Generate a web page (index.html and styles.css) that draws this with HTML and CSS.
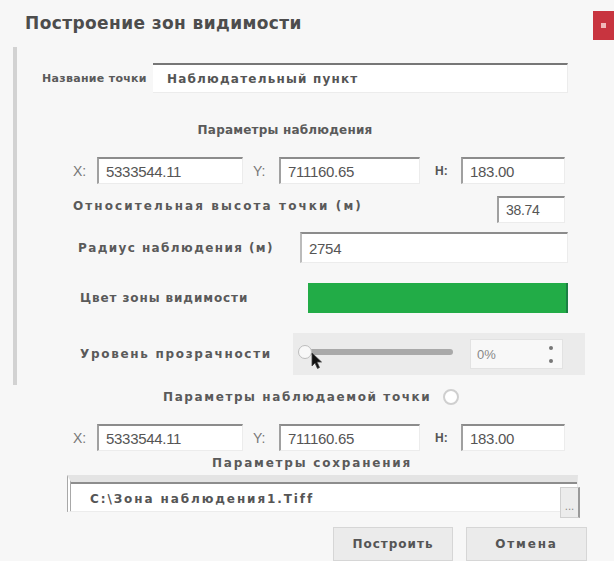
FILE: index.html
```html
<!DOCTYPE html>
<html lang="ru">
<head>
<meta charset="utf-8">
<title>Построение зон видимости</title>
<link rel="stylesheet" href="styles.css">
</head>
<body>
<div class="dialog">
  <div class="titlebar">
    <div class="title">Построение зон видимости</div>
    <div class="close"><span></span></div>
  </div>

  <div class="panel">
    <div class="row name-row">
      <span class="label">Название точки</span>
      <div class="field name-field">Наблюдательный пункт</div>
    </div>

    <div class="heading heading-obs">Параметры наблюдения</div>

    <div class="coords">
      <span class="axis ax-x">X:</span><div class="field num fx">5333544.11</div>
      <span class="axis ax-y">Y:</span><div class="field num fy">711160.65</div>
      <span class="axis ax-h">H:</span><div class="field num fh">183.00</div>
    </div>

    <div class="row rel-row">
      <span class="label">Относительная высота точки (м)</span>
      <div class="field num rel-field">38.74</div>
    </div>

    <div class="row radius-row">
      <span class="label">Радиус наблюдения (м)</span>
      <div class="field num radius-field">2754</div>
    </div>

    <div class="row color-row">
      <span class="label">Цвет зоны видимости</span>
      <div class="swatch"></div>
    </div>

    <div class="row alpha-row">
      <span class="label">Уровень прозрачности</span>
      <div class="alpha-box">
        <div class="slider">
          <div class="track"></div>
          <div class="thumb"></div>
          <svg class="cursor" width="12" height="18" viewBox="0 0 12 18"><path d="M1 1 L1 14 L4 11 L6.5 16.5 L8.5 15.5 L6 10 L10.5 10 Z" fill="#111" stroke="#444" stroke-width="0.8" stroke-linejoin="round"/></svg>
        </div>
        <div class="spin">
          <span class="spin-val">0%</span>
          <span class="spin-arrows"><i></i><i></i></span>
        </div>
      </div>
    </div>
  </div>

  <div class="heading heading-target">Параметры наблюдаемой точки <span class="radio"></span></div>

  <div class="coords coords-target">
    <span class="axis ax-x">X:</span><div class="field num fx">5333544.11</div>
    <span class="axis ax-y">Y:</span><div class="field num fy">711160.65</div>
    <span class="axis ax-h">H:</span><div class="field num fh">183.00</div>
  </div>

  <div class="heading heading-save">Параметры сохранения</div>

  <div class="file-row">
    <div class="field file-field">C:\Зона наблюдения1.Tiff</div>
    <div class="browse">...</div>
  </div>

  <div class="actions">
    <div class="btn btn-build">Построить</div>
    <div class="btn btn-cancel">Отмена</div>
  </div>
</div>
</body>
</html>
```

FILE: styles.css
```css
html, body {
  margin: 0;
  padding: 0;
  background: #f7f7f7;
  overflow: hidden;
}

.dialog {
  width: 614px;
  height: 561px;
  font-family: "DejaVu Sans", "Noto Sans", sans-serif;
  color: #555;
}

/* title bar */
.titlebar {
  height: 47px;
  display: flex;
  justify-content: space-between;
  align-items: flex-start;
}
.title {
  padding-left: 25px;
  line-height: 47px;
  font-size: 17px;
  font-weight: bold;
  letter-spacing: 0.4px;
  color: #4d4d4d;
}
.close {
  margin-top: 11px;
  width: 21px;
  height: 29px;
  background: #c8343f;
  display: flex;
  align-items: center;
  justify-content: center;
}
.close span {
  width: 5px;
  height: 5px;
  background: #f0b9b9;
}

/* bordered upper group */
.panel {
  margin-left: 13px;
  border-left: 4px solid #d2d2d2;
  padding: 16px 0 10px 0;
}

.row {
  display: flex;
  align-items: center;
}

.label {
  font-size: 12px;
  font-weight: bold;
  color: #5a5a5a;
  white-space: nowrap;
}

.field {
  box-sizing: border-box;
  background: #fff;
  border-top: 2px solid #8c8c8c;
  border-left: 2px solid #a0a0a0;
  border-right: 1px solid #ececec;
  border-bottom: 1px solid #ececec;
  display: flex;
  align-items: center;
  white-space: nowrap;
}
.num {
  font-family: "Liberation Sans", Arial, sans-serif;
  font-size: 15px;
  color: #555;
  padding-left: 7px;
  letter-spacing: -0.3px;
}

.name-row {
  height: 30px;
  padding-left: 25px;
}
.name-row .label {
  width: 111px;
  font-size: 11px;
  letter-spacing: 0.3px;
}
.name-field {
  width: 415px;
  height: 30px;
  padding-left: 14px;
  font-size: 12px;
  font-weight: bold;
  letter-spacing: 1.2px;
  color: #555;
  border-left: none;
  border-top-color: #777;
}

.heading {
  height: 20px;
  line-height: 20px;
  font-size: 12px;
  font-weight: bold;
  color: #5a5a5a;
  white-space: nowrap;
}
.heading-obs {
  margin-top: 27px;
  width: 536px;
  text-align: center;
  letter-spacing: 0.2px;
}

.coords {
  margin-top: 17px;
  height: 27px;
  display: flex;
  align-items: center;
  padding-left: 56px;
}
.axis {
  font-family: "Liberation Sans", Arial, sans-serif;
  font-size: 14px;
  color: #777;
  width: 24px;
}
.ax-y { margin-left: 10px; width: 26px; }
.ax-h { margin-left: 15px; width: 26px; color: #555; font-weight: bold; font-size: 12px; }
.coords .field { height: 27px; }
.fx { width: 146px; }
.fy { width: 141px; }
.fh { width: 104px; }

.rel-row {
  margin-top: 12px;
  height: 27px;
  padding-left: 56px;
  align-items: flex-start;
}
.rel-row .label {
  line-height: 20px;
  width: 424px;
  letter-spacing: 2.1px;
}
.rel-field {
  width: 68px;
  height: 27px;
  font-size: 14px;
}

.radius-row {
  margin-top: 9px;
  height: 31px;
  padding-left: 61px;
}
.radius-row .label { width: 222px; letter-spacing: 1.4px; }
.radius-field {
  width: 268px;
  height: 31px;
  border-left-color: #bbb;
}

.color-row {
  margin-top: 20px;
  height: 30px;
  padding-left: 63px;
}
.color-row .label { width: 228px; letter-spacing: 0.9px; }
.swatch {
  width: 260px;
  height: 30px;
  background: #22ac47;
  border-right: 2px solid #1b7f43;
  box-sizing: border-box;
}

.alpha-row {
  margin-top: 20px;
  height: 42px;
  padding-left: 63px;
}
.alpha-row .label { width: 213px; letter-spacing: 1.7px; }
.alpha-box {
  width: 292px;
  height: 42px;
  background: #ebebeb;
  display: flex;
  align-items: center;
}
.slider {
  position: relative;
  width: 177px;
  height: 42px;
}
.track {
  position: absolute;
  left: 12px;
  top: 16px;
  width: 148px;
  height: 6px;
  border-radius: 3px;
  background: #a9a9a9;
}
.thumb {
  position: absolute;
  left: 5px;
  top: 12px;
  width: 12px;
  height: 12px;
  border-radius: 50%;
  background: #f8f8f8;
  border: 1.5px solid #bdbdbd;
}
.cursor {
  position: absolute;
  left: 18px;
  top: 19px;
}
.spin {
  box-sizing: border-box;
  width: 93px;
  height: 30px;
  background: #f8f8f8;
  border: 1px solid #e2e2e2;
  display: flex;
  align-items: center;
  justify-content: space-between;
  padding: 0 9px 0 6px;
}
.spin-val {
  font-family: "Liberation Sans", Arial, sans-serif;
  font-size: 13px;
  color: #888;
}
.spin-arrows {
  display: flex;
  flex-direction: column;
  justify-content: space-between;
  height: 17px;
}
.spin-arrows i {
  display: block;
  width: 4px;
  height: 4px;
  border-radius: 50%;
  background: #777;
}

/* lower part */
.heading-target {
  margin-top: 2px;
  padding-left: 163px;
  display: flex;
  align-items: center;
  letter-spacing: 1.6px;
}
.radio {
  display: inline-block;
  margin-left: 12px;
  width: 12px;
  height: 12px;
  border-radius: 50%;
  border: 2px solid #cfcfcf;
  background: #fff;
}

.coords-target {
  margin-top: 17px;
  padding-left: 73px;
}

.heading-save {
  margin-top: 2px;
  width: 624px;
  text-align: center;
  letter-spacing: 1.8px;
}

.file-row {
  position: relative;
  margin-top: 2px;
  margin-left: 67px;
  width: 511px;
  height: 37px;
}
.file-field {
  width: 511px;
  height: 37px;
  padding: 5px 0 0 19px;
  border-top: 7px solid #e4e4e4;
  border-left: 4px double #a8a8a8;
  box-shadow: inset 0 2px 0 #8d8d8d;
  font-size: 12px;
  font-weight: bold;
  letter-spacing: 1.9px;
  color: #555;
}
.browse {
  position: absolute;
  right: -2px;
  top: 12px;
  width: 20px;
  height: 31px;
  box-sizing: border-box;
  background: #ececec;
  border: 1px solid #d0d0d0;
  border-right: 2px solid #9a9a9a;
  font-size: 10px;
  color: #888;
  display: flex;
  align-items: flex-end;
  justify-content: center;
  line-height: 20px;
}

.actions {
  margin-top: 15px;
  display: flex;
  padding-left: 333px;
  gap: 13px;
}
.btn {
  box-sizing: border-box;
  height: 34px;
  background: #ebebeb;
  border: 1px solid #d6d6d6;
  display: flex;
  align-items: center;
  justify-content: center;
  font-size: 12px;
  font-weight: bold;
  color: #555;
}
.btn-build { width: 120px; letter-spacing: 1px; }
.btn-cancel { width: 121px; letter-spacing: 1.8px; }
```
